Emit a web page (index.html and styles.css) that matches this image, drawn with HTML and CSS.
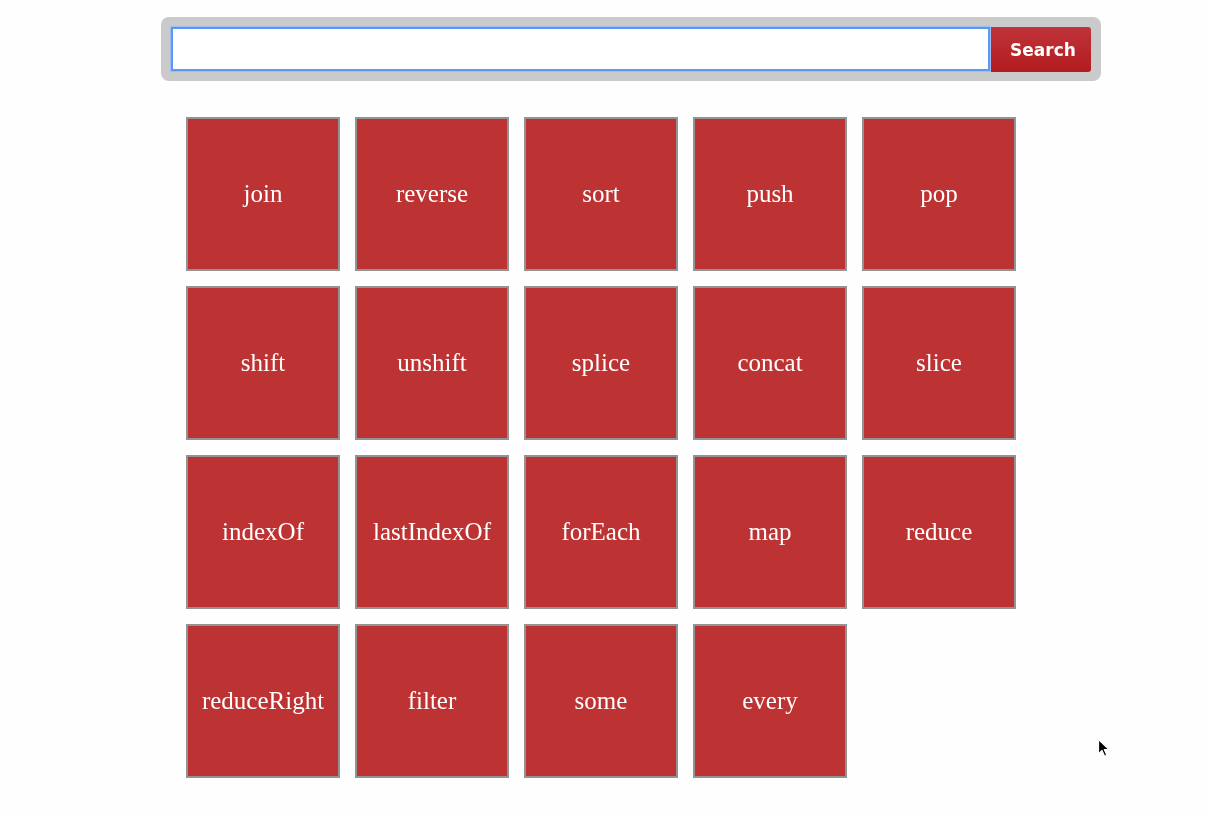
FILE: index.html
```html
<!DOCTYPE html>
<html>
<head>
<meta charset="utf-8">
<link rel="stylesheet" href="styles.css">
</head>
<body>
<div class="page">
  <form class="search-bar">
    <input class="search-input" type="text" autofocus>
    <button class="search-btn" type="button">Search</button>
  </form>
  <div class="grid">
    <div class="tile">join</div>
    <div class="tile">reverse</div>
    <div class="tile">sort</div>
    <div class="tile">push</div>
    <div class="tile">pop</div>
    <div class="tile">shift</div>
    <div class="tile">unshift</div>
    <div class="tile">splice</div>
    <div class="tile">concat</div>
    <div class="tile">slice</div>
    <div class="tile">indexOf</div>
    <div class="tile">lastIndexOf</div>
    <div class="tile">forEach</div>
    <div class="tile">map</div>
    <div class="tile">reduce</div>
    <div class="tile">reduceRight</div>
    <div class="tile">filter</div>
    <div class="tile">some</div>
    <div class="tile">every</div>
  </div>
</div>
<svg class="cursor" width="16" height="22" viewBox="0 0 16 22">
  <path d="M1.5 1.5 L1.5 16 L5 12.5 L7.6 18.3 L9.8 17.3 L7.3 11.6 L12 11.6 Z" fill="#000" stroke="#fff" stroke-width="1.2" stroke-linejoin="round"/>
</svg>
</body>
</html>
```
FILE: styles.css
```css
html, body {
  margin: 0;
  padding: 0;
  background: #fefefe;
}
.page {
  padding-top: 17px;
  padding-left: 161px;
  font-family: "Liberation Serif", "Times New Roman", serif;
}
.search-bar {
  box-sizing: border-box;
  width: 940px;
  height: 64px;
  margin: 0;
  padding: 9px 10px 9px 9px;
  background: #cacaca;
  border-radius: 8px;
  display: flex;
  align-items: stretch;
}
.search-input {
  box-sizing: border-box;
  width: 821px;
  height: 46px;
  margin: 0;
  border: 1px solid #9cbef2;
  outline: 2px solid #5e97f0;
  outline-offset: -3px;
  background: #fff;
  padding: 0 8px;
  font-size: 16px;
}
.search-btn {
  box-sizing: border-box;
  width: 100px;
  height: 45px;
  margin-top: 1px;
  border: none;
  border-radius: 0 3px 3px 0;
  background: linear-gradient(to bottom, #c0333a 0%, #b11c1e 100%);
  color: #fff;
  font-family: "DejaVu Sans", "Liberation Sans", sans-serif;
  font-weight: 700;
  font-size: 17px;
  padding: 0 0 0 4px;
}
.grid {
  margin-top: 36px;
  margin-left: 25px;
  display: grid;
  grid-template-columns: repeat(5, 154px);
  gap: 15px;
}
.tile {
  box-sizing: border-box;
  width: 154px;
  height: 154px;
  border: 2px solid #939393;
  background: #bd3232;
  color: #fff;
  font-size: 25px;
  display: flex;
  align-items: center;
  justify-content: center;
}
.cursor {
  position: absolute;
  left: 1097px;
  top: 738px;
}
```
